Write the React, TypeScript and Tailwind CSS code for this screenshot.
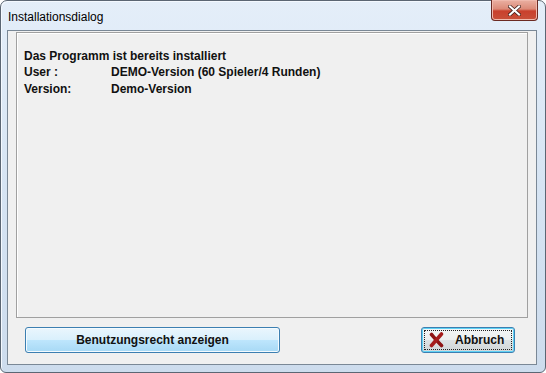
import React from 'react';

const font = { fontFamily: '"Liberation Sans", Arial, sans-serif' };

const rows = [
  { label: 'User :', value: 'DEMO-Version (60 Spieler/4 Runden)' },
  { label: 'Version:', value: 'Demo-Version' },
];

function CancelIcon() {
  return (
    <svg width="15" height="16" viewBox="0 0 15 16" className="shrink-0">
      <path d="M2.5 2.5 C6 6.5 9 10 12.5 13.5" stroke="#8e1414" strokeWidth="3.6" strokeLinecap="round" fill="none" />
      <path d="M12.5 2 C9 6 6 9.5 2.5 13.5" stroke="#a51c1c" strokeWidth="3.6" strokeLinecap="round" fill="none" />
    </svg>
  );
}

export default function App() {
  return (
    <div className="w-[546px] h-[373px] bg-white" style={font}>
      <div className="relative flex h-full flex-col rounded-t-[7px] rounded-b-[6px] border border-[#5b6673] bg-gradient-to-b from-[#e4eef9] via-[#d6e4f3] to-[#cddced] shadow-[inset_1px_1px_0_#f4f9ff]">
        {/* Title bar */}
        <div className="flex h-[28px] items-start justify-between">
          <span className="pl-[7px] pt-[9px] text-[12px] leading-[14px] text-black">Installationsdialog</span>
          <button className="-mt-px mr-[7px] flex h-[21px] w-[47px] items-center justify-center rounded-b-[4px] border border-t-0 border-[#6b2a22] bg-[linear-gradient(#eab0a2,#dc8a78_45%,#c9402c_55%,#c8503a)] shadow-[inset_0_0_0_1px_#f0b9ad]">
            <svg width="13" height="11" viewBox="0 0 13 11">
              <path d="M2 1.5 L11 9.5 M11 1.5 L2 9.5" stroke="#3a1a16" strokeWidth="3.6" strokeLinecap="square" />
              <path d="M2 1.5 L11 9.5 M11 1.5 L2 9.5" stroke="#ffffff" strokeWidth="2.2" strokeLinecap="square" />
            </svg>
          </button>
        </div>

        {/* Client area */}
        <div className="ml-[6px] mr-[8px] mt-px mb-[7px] flex flex-1 flex-col border border-[#7a8896] bg-[#f0f0f0] px-[8px]">
          <div className="mt-[1px] flex-1 border border-[#a0a0a0] bg-[#f0f0f0] pl-[7px] pt-[15px] shadow-[inset_1px_1px_0_#ffffff]">
            <div className="text-[12px] font-bold leading-[16px] text-[#111]">Das Programm ist bereits installiert</div>
            {rows.map((r) => (
              <div key={r.label} className="flex text-[12px] font-bold leading-[16.5px] text-[#111]">
                <span className="w-[87px]">{r.label}</span>
                <span>{r.value}</span>
              </div>
            ))}
          </div>

          <div className="flex items-center justify-between pl-[9px] pr-[13px] pt-[9px] pb-[11px]">
            <button className="h-[26px] w-[255px] rounded-[3px] border border-[#3c7fb1] bg-[linear-gradient(#eaf6fd,#d9f0fc_50%,#bee6fd_50%,#a7d9f5)] text-[12px] font-bold text-[#111] shadow-[inset_0_0_0_1px_#f4fbff]">
              Benutzungsrecht anzeigen
            </button>
            <button className="h-[26px] w-[94px] rounded-[3px] border border-[#3c7fb1] bg-[linear-gradient(#f4f6f7,#ecefef_50%,#dde2e4_50%,#d0d6d9)] p-[2px] shadow-[inset_0_0_0_1px_#5fd2f5]">
              <div className="flex h-full items-center gap-[11px] border border-dotted border-[#222] pl-[4px]">
                <CancelIcon />
                <span className="text-[12px] font-bold text-[#111]">Abbruch</span>
              </div>
            </button>
          </div>
        </div>
      </div>
    </div>
  );
}
